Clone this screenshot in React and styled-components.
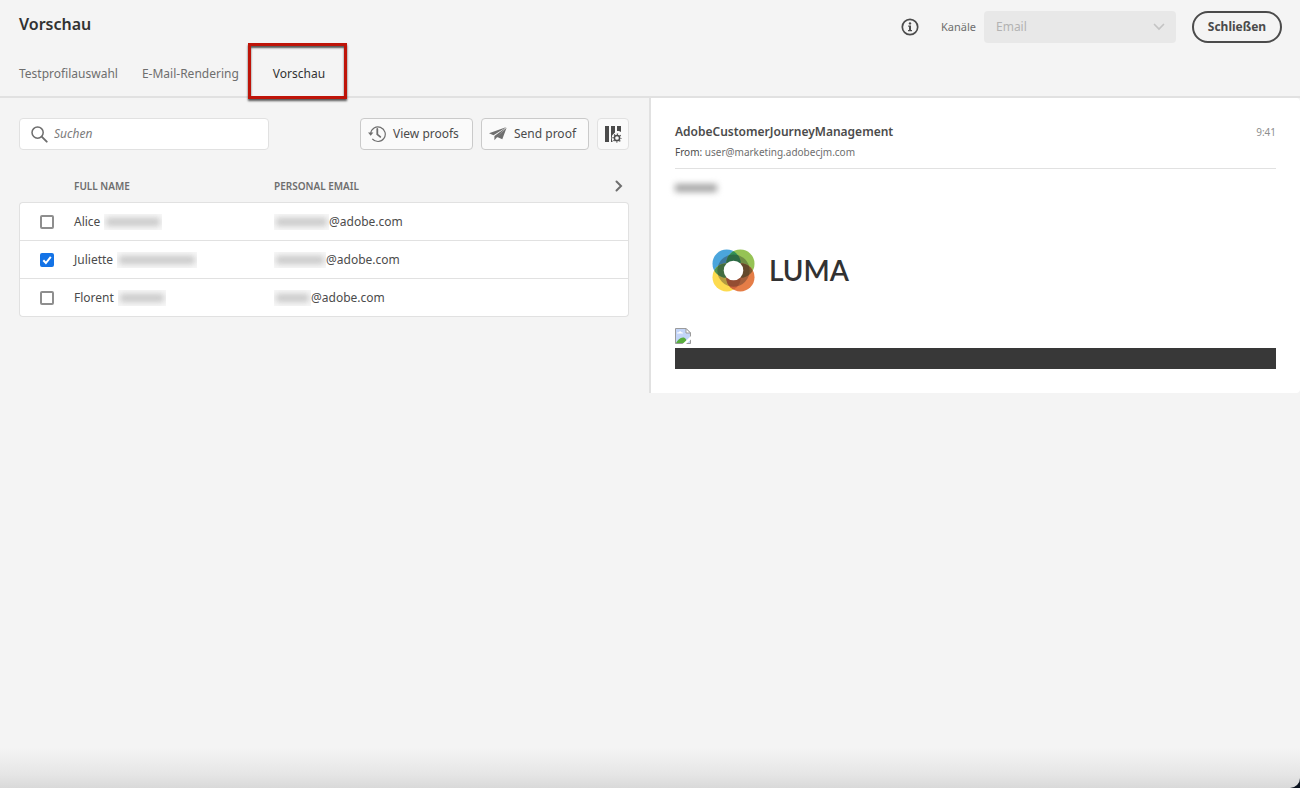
import React, { useState } from "react";
import styled, { createGlobalStyle } from "styled-components";

const GlobalStyle = createGlobalStyle`
  *, *::before, *::after { box-sizing: border-box; }
  body {
    margin: 0;
    background: #0c1420;
    color: #4b4b4b;
    font-family: "Noto Sans", "Open Sans", sans-serif;
    font-size: 12px;
    line-height: 20px;
  }
  button, input, select { font: inherit; color: inherit; }
`;

const Page = styled.div`
  min-height: 100vh;
  display: flex;
  flex-direction: column;
  border-bottom-right-radius: 10px;
  background: linear-gradient(to top, #d9d9d9 0, #e6e6e6 14px, #f4f4f4 40px);
`;

const Header = styled.header`
  border-bottom: 2px solid #e1e1e1;
  padding: 11px 18px 0 19px;
`;

const TopRow = styled.div`
  display: flex;
  justify-content: space-between;
  height: 32px;
`;

const Title = styled.h1`
  margin: 0;
  color: #323232;
  font-size: 16px;
  line-height: 26px;
  font-weight: 600;
`;

const Actions = styled.div`
  display: flex;
  align-items: center;
  gap: 16px;
`;

const IconButton = styled.button`
  display: flex;
  padding: 0;
  border: 0;
  background: none;
  color: #4b4b4b;
`;

const Channel = styled.div`
  display: flex;
  align-items: center;
  gap: 8px;
  margin-left: 6px;
`;

const ChannelLabel = styled.label`
  color: #6e6e6e;
  font-size: 11px;
`;

const SelectWrap = styled.div`
  position: relative;
  width: 192px;

  svg {
    position: absolute;
    right: 11px;
    top: 12px;
    pointer-events: none;
  }
`;

const Select = styled.select`
  appearance: none;
  display: block;
  width: 100%;
  height: 32px;
  padding: 0 32px 0 12px;
  border: 0;
  border-radius: 4px;
  background: #e8e8e8;
  color: #b3b3b3;
  opacity: 1;
`;

const CloseButton = styled.button`
  height: 32px;
  width: 90px;
  padding: 0;
  border: 2px solid #4b4b4b;
  border-radius: 16px;
  background: transparent;
  font-weight: 700;
  line-height: 26px;
`;

const Tabs = styled.nav`
  display: flex;
  gap: 24px;
  height: 53px;
`;

const Tab = styled.button`
  position: relative;
  height: 53px;
  padding: 8px 0 0;
  border: 0;
  background: none;
  white-space: nowrap;
  color: ${(p) => (p.$active ? "#323232" : "#6e6e6e")};
  margin-left: ${(p) => (p.$active ? "10px" : "0")};
`;

const Highlight = styled.span`
  position: absolute;
  inset: 0 -22px -3px -25px;
  border: 3px solid #be1409;
  box-shadow: 0 2px 2px rgba(0, 0, 0, 0.65), inset 0 2px 2px rgba(0, 0, 0, 0.65);
  pointer-events: none;
`;

const Main = styled.main`
  display: flex;
  align-items: flex-start;
`;

const ListPane = styled.section`
  flex: 0 0 calc(50% - 1px);
  padding: 20px 20px 0 19px;
`;

const Toolbar = styled.div`
  display: flex;
  gap: 8px;
  height: 32px;
`;

const SearchBox = styled.label`
  display: flex;
  align-items: center;
  gap: 6px;
  width: 250px;
  margin-right: auto;
  padding: 0 11px;
  border: 1px solid #e1e1e1;
  border-radius: 4px;
  background: #fff;
`;

const SearchInput = styled.input`
  flex: 1;
  min-width: 0;
  padding: 0;
  border: 0;
  outline: 0;
  background: none;

  &::placeholder {
    color: #7c7c7c;
    font-style: italic;
    opacity: 1;
  }
`;

const ToolButton = styled.button`
  display: flex;
  align-items: center;
  justify-content: ${(p) => (p.$quiet ? "center" : "flex-start")};
  gap: 7px;
  width: ${(p) => p.$width};
  padding: 0 7px;
  border: 1px solid ${(p) => (p.$quiet ? "#e1e1e1" : "#cacaca")};
  border-radius: 4px;
  background: #fafafa;
  white-space: nowrap;

  svg { flex: none; }
`;

const Table = styled.table`
  width: 100%;
  margin-top: 16px;
  border-collapse: separate;
  border-spacing: 0;
  table-layout: fixed;

  th {
    height: 36px;
    padding: 4px 0 0;
    color: #6e6e6e;
    font-size: 10px;
    line-height: 16px;
    font-weight: 600;
    text-align: left;
  }
  td {
    height: 38px;
    padding: 0;
    background: #fff;
    border-bottom: 1px solid #e1e1e1;
  }
  tbody tr:first-child td { height: 39px; border-top: 1px solid #e1e1e1; }
  td:first-child { border-left: 1px solid #e1e1e1; }
  td:last-child { border-right: 1px solid #e1e1e1; }
  tbody tr:first-child td:first-child { border-top-left-radius: 4px; }
  tbody tr:first-child td:last-child { border-top-right-radius: 4px; }
  tbody tr:last-child td:first-child { border-bottom-left-radius: 4px; }
  tbody tr:last-child td:last-child { border-bottom-right-radius: 4px; }
`;

const CheckColumn = styled.col`
  width: 55px;
`;
const NameColumn = styled.col`
  width: 200px;
`;
const MoreColumn = styled.col`
  width: 15px;
`;

const Checkbox = styled.input`
  appearance: none;
  display: block;
  width: 14px;
  height: 14px;
  margin: 0 0 0 20px;
  border: 2px solid #8e8e8e;
  border-radius: 2px;
  background: #fff;

  &:checked {
    border-color: #1473e6;
    background: #1473e6
      url("data:image/svg+xml,%3Csvg xmlns='http://www.w3.org/2000/svg' viewBox='0 0 10 10'%3E%3Cpath d='M1.3 5.2l2.6 2.8L8.8 1.8' fill='none' stroke='white' stroke-width='2'/%3E%3C/svg%3E")
      center / 10px 10px no-repeat;
  }
`;

const Cell = styled.div`
  display: flex;
  align-items: center;
  gap: ${(p) => p.$gap || "0"};
`;

const Redacted = styled.span`
  width: ${(p) => p.$width};
  height: 16px;
  overflow: hidden;
  background: #f9f9f9;

  &::before {
    content: "";
    display: block;
    height: 8px;
    margin: 4px 2px;
    background: #c6c6c6;
    filter: blur(3px);
  }
`;

const PreviewPane = styled.section`
  flex: 1;
  min-width: 0;
  border-left: 2px solid #e1e1e1;
`;

const Mail = styled.article`
  padding: 24px;
  border-radius: 0 4px 4px 0;
  background: #fff;
`;

const MailHeader = styled.header`
  display: flex;
  justify-content: space-between;
  padding-bottom: 6px;
  border-bottom: 1px solid #e1e1e1;
`;

const Sender = styled.h2`
  margin: 0;
  font-size: 12px;
  line-height: 20px;
  font-weight: 600;
`;

const From = styled.p`
  margin: 0;
  color: #6e6e6e;
  font-size: 10px;
  line-height: 20px;

  span { color: #4b4b4b; }
`;

const Time = styled.time`
  color: #8e8e8e;
  font-size: 10px;
`;

const Subject = styled.div`
  display: flex;
  width: 44px;
  height: 20px;
  margin-top: 11px;

  &::before {
    content: "";
    flex: 1;
    height: 8px;
    margin: 4px 2px 4px 0;
    background: #a4a4a4;
    filter: blur(3px);
  }
`;

const Logo = styled.div`
  display: flex;
  align-items: center;
  gap: 14px;
  margin: 49px 0 36px 37px;
  color: #323232;
  font-family: Lato, sans-serif;
  font-size: 28px;
  line-height: 43px;
  font-weight: 600;
`;

const BrokenImage = styled.div`
  height: 20px;
  svg { display: block; }
`;

const FooterBar = styled.div`
  height: 21px;
  background: #383838;
`;

const InfoIcon = () => (
  <svg width="18" height="18" viewBox="0 0 18 18" aria-hidden="true">
    <circle cx="9" cy="9" r="7.7" fill="none" stroke="currentColor" strokeWidth="1.7" />
    <circle cx="9" cy="5.4" r="1.2" fill="currentColor" />
    <path d="M7.2 7.6H10v4.5h1V13.2H7v-1.1h1V8.7h-.8z" fill="currentColor" />
  </svg>
);

const ChevronDown = () => (
  <svg width="12" height="8" viewBox="0 0 12 8" aria-hidden="true">
    <path d="M1.5 1.5L6 6l4.500-4.500" fill="none" stroke="#c4c4c4" strokeWidth="1.7" strokeLinecap="round" />
  </svg>
);

const ChevronRight = () => (
  <svg width="10" height="12" viewBox="0 0 10 12" aria-hidden="true">
    <path d="M2.500 1.500L7 6l-4.500 4.500" fill="none" stroke="#6e6e6e" strokeWidth="2" strokeLinecap="round" />
  </svg>
);

const SearchIcon = () => (
  <svg width="17" height="17" viewBox="0 0 17 17" aria-hidden="true">
    <circle cx="6.600" cy="6.600" r="5.600" fill="none" stroke="#6e6e6e" strokeWidth="1.500" />
    <path d="M10.700 10.700l5 5" stroke="#6e6e6e" strokeWidth="1.900" strokeLinecap="round" />
  </svg>
);

const HistoryIcon = () => (
  <svg width="18" height="18" viewBox="0 0 18 18" aria-hidden="true">
    <path d="M2.700 8.600A7.300 7.300 0 1 1 4.300 13.800" fill="none" stroke="#6e6e6e" strokeWidth="1.200" />
    <path d="M0 7.600h5.400L2.700 10.800z" fill="#6e6e6e" />
    <path d="M9.300 4v5.400l3 2.500" fill="none" stroke="#6e6e6e" strokeWidth="1.800" strokeLinecap="round" strokeLinejoin="round" />
  </svg>
);

const SendIcon = () => (
  <svg width="18" height="16" viewBox="0 0 18 16" aria-hidden="true">
    <path d="M17.500 1L0 7.300l4.500 2z M17.200 1.400L5.400 10v4.200l2.400-2.700z M17.600 1.800L8.200 10.900l5.100 2.300z" fill="#6e6e6e" />
  </svg>
);

const ColumnsIcon = () => (
  <svg width="18" height="18" viewBox="0 0 18 18" aria-hidden="true">
    <path d="M1 1h4v16H1zM7 1h4v6.500L8.500 10v7H7zM13 1h4v6l-2-1h-2z" fill="#4b4b4b" />
    <circle cx="13" cy="13" r="5.300" fill="#fafafa" />
    <circle cx="13" cy="13" r="2.600" fill="none" stroke="#4b4b4b" strokeWidth="1.500" />
    <circle cx="13" cy="13" r="3.900" fill="none" stroke="#4b4b4b" strokeWidth="1.400" strokeDasharray="1.300 1.763" strokeDashoffset=".65" />
  </svg>
);

const LumaMark = () => (
  <svg width="43" height="43" viewBox="0 0 44 44" aria-hidden="true">
    <circle cx="15" cy="15" r="14.500" fill="#4ba5dc" />
    <circle cx="29" cy="15" r="14.500" fill="#96c355" />
    <circle cx="15" cy="29" r="14.500" fill="#fddb4f" />
    <circle cx="29" cy="29" r="14.500" fill="#e57d47" />
    <clipPath id="luma-tl"><circle cx="15" cy="15" r="14.500" /></clipPath>
    <clipPath id="luma-br"><circle cx="29" cy="29" r="14.500" /></clipPath>
    <g clipPath="url(#luma-tl)">
      <circle cx="29" cy="15" r="14.500" fill="#329055" />
      <circle cx="15" cy="29" r="14.500" fill="#519350" />
    </g>
    <g clipPath="url(#luma-br)">
      <circle cx="29" cy="15" r="14.500" fill="#845b30" />
      <circle cx="15" cy="29" r="14.500" fill="#cf633b" />
    </g>
    <circle cx="22" cy="22" r="16.500" fill="#222" opacity=".34" />
    <circle cx="22" cy="22" r="10" fill="#fff" />
  </svg>
);

const BrokenIcon = () => (
  <svg width="16" height="16" viewBox="0 0 16 16" role="img" aria-label="Bild">
    <path d="M.500.500h10.500l4.500 4.500v10.500H.500z" fill="#c3d5f8" stroke="#9b9b9b" />
    <path d="M11 .500V5h4.500z" fill="#fff" stroke="#9b9b9b" />
    <path d="M2 5.500c0-1 1-1.500 1.700-1.100C4.300 2.900 6 3 6.300 4.200 7.400 4 8 4.600 8 5.500z" fill="#fff" />
    <path d="M1 15c1.500-3 4-5.500 7-5.500 2 0 3.500 1.500 4 5.500z" fill="#58ad3d" />
    <path d="M7.500 16L16 8v3.500L11 16z" fill="#fff" />
  </svg>
);

const profiles = [
  { name: "Alice", nameWidth: "58px", mailWidth: "55px" },
  { name: "Juliette", nameWidth: "80px", mailWidth: "52px" },
  { name: "Florent", nameWidth: "48px", mailWidth: "37px" },
];

export default function App() {
  const [selected, setSelected] = useState("Juliette");

  return (
    <>
      <GlobalStyle />
      <Page>
        <Header>
          <TopRow>
            <Title>Vorschau</Title>
            <Actions>
              <IconButton type="button" aria-label="Info"><InfoIcon /></IconButton>
              <Channel>
                <ChannelLabel htmlFor="channel">Kanäle</ChannelLabel>
                <SelectWrap>
                  <Select id="channel" disabled defaultValue="email">
                    <option value="email">Email</option>
                  </Select>
                  <ChevronDown />
                </SelectWrap>
              </Channel>
              <CloseButton type="button">Schließen</CloseButton>
            </Actions>
          </TopRow>
          <Tabs>
            <Tab type="button">Testprofilauswahl</Tab>
            <Tab type="button">E-Mail-Rendering</Tab>
            <Tab type="button" $active aria-current="page">
              Vorschau
              <Highlight />
            </Tab>
          </Tabs>
        </Header>
        <Main>
          <ListPane>
            <Toolbar>
              <SearchBox>
                <SearchIcon />
                <SearchInput type="text" placeholder="Suchen" aria-label="Suchen" />
              </SearchBox>
              <ToolButton type="button" $width="113px"><HistoryIcon />View proofs</ToolButton>
              <ToolButton type="button" $width="108px"><SendIcon />Send proof</ToolButton>
              <ToolButton type="button" $width="32px" $quiet aria-label="Spalten"><ColumnsIcon /></ToolButton>
            </Toolbar>
            <Table>
              <colgroup>
                <CheckColumn />
                <NameColumn />
                <col />
                <MoreColumn />
              </colgroup>
              <thead>
                <tr>
                  <th />
                  <th scope="col">FULL NAME</th>
                  <th scope="col">PERSONAL EMAIL</th>
                  <th><IconButton type="button" aria-label="Weiter"><ChevronRight /></IconButton></th>
                </tr>
              </thead>
              <tbody>
                {profiles.map((p) => (
                  <tr key={p.name}>
                    <td>
                      <Checkbox
                        type="checkbox"
                        aria-label={p.name}
                        checked={selected === p.name}
                        onChange={() => setSelected(p.name)}
                      />
                    </td>
                    <td><Cell $gap="4px">{p.name}<Redacted $width={p.nameWidth} /></Cell></td>
                    <td><Cell><Redacted $width={p.mailWidth} />@adobe.com</Cell></td>
                    <td />
                  </tr>
                ))}
              </tbody>
            </Table>
          </ListPane>
          <PreviewPane>
            <Mail>
              <MailHeader>
                <div>
                  <Sender>AdobeCustomerJourneyManagement</Sender>
                  <From><span>From:</span> user@marketing.adobecjm.com</From>
                </div>
                <Time>9:41</Time>
              </MailHeader>
              <Subject />
              <Logo><LumaMark />LUMA</Logo>
              <BrokenImage><BrokenIcon /></BrokenImage>
              <FooterBar />
            </Mail>
          </PreviewPane>
        </Main>
      </Page>
    </>
  );
}
